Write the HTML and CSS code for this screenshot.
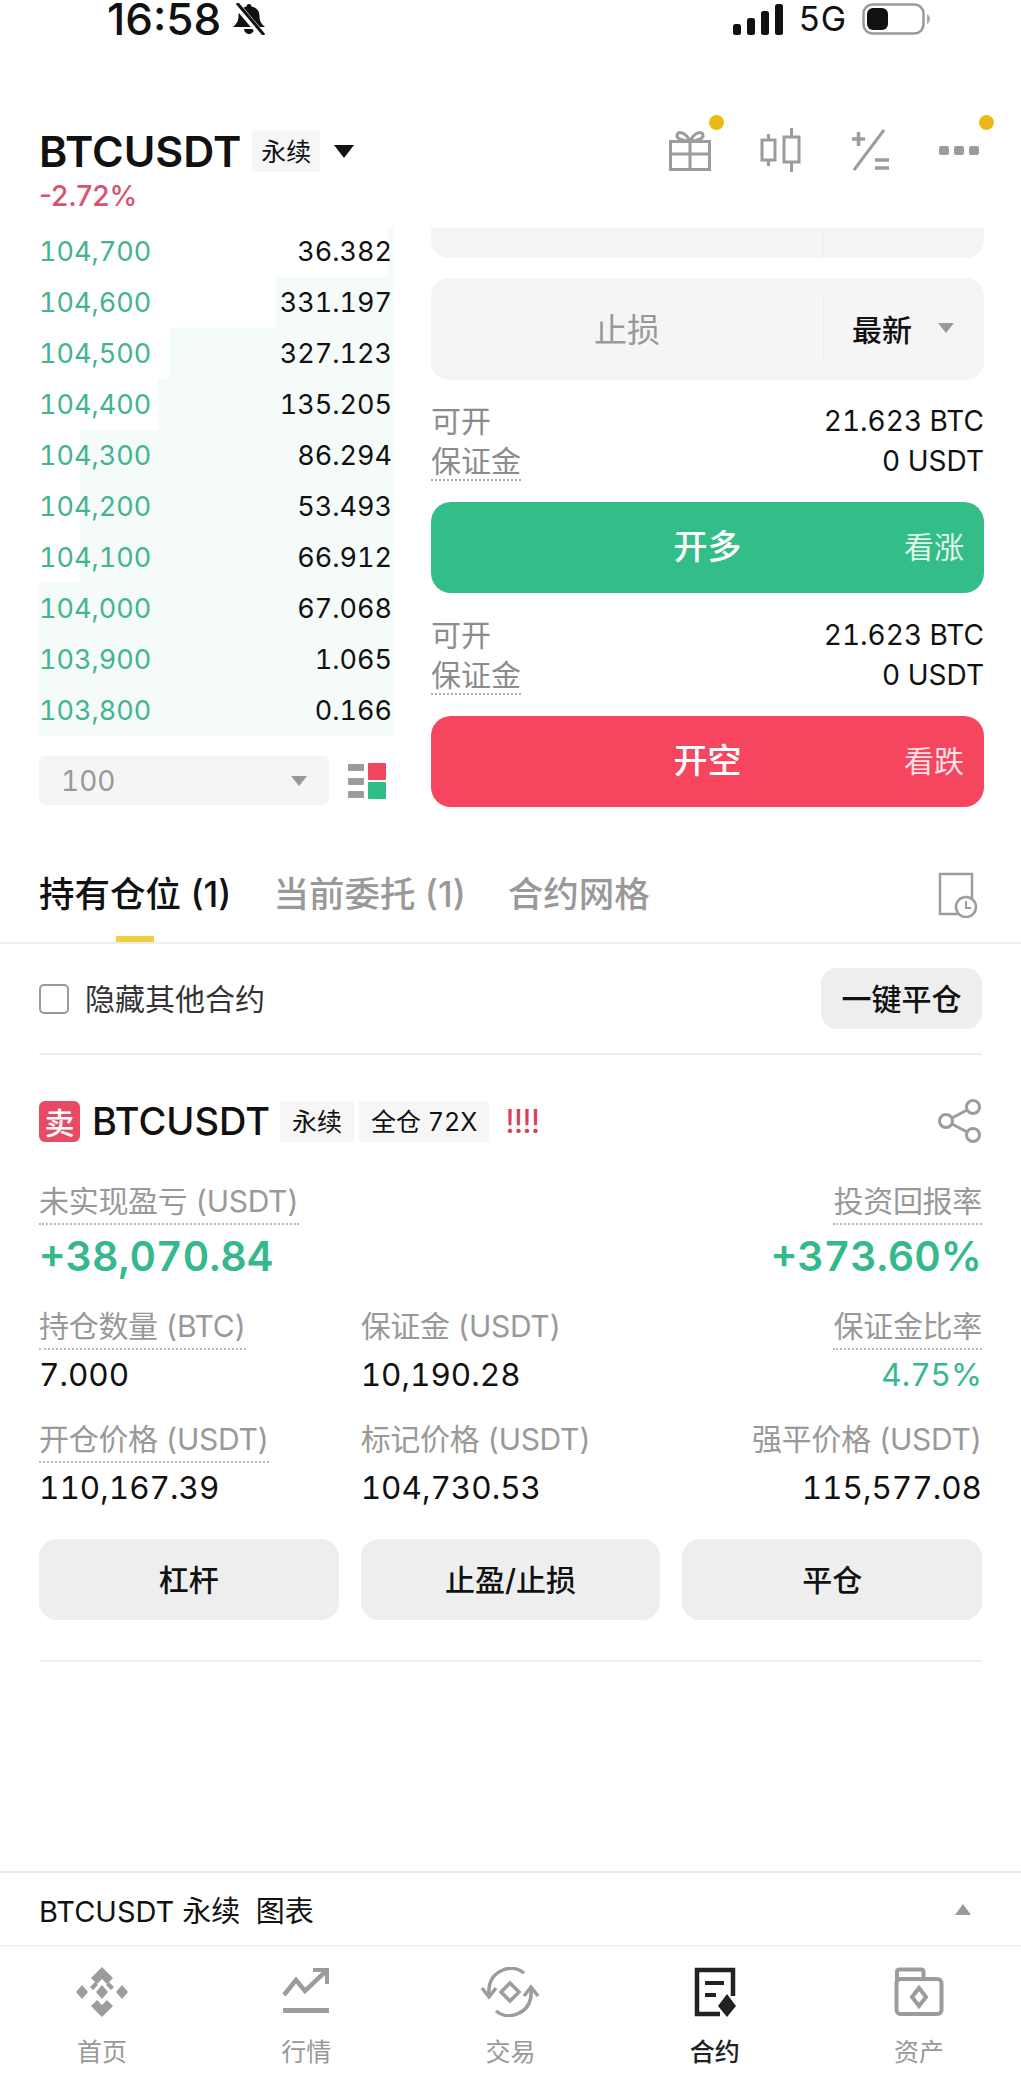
FILE: index.html
```html
<!DOCTYPE html>
<html lang="zh">
<head>
<meta charset="utf-8">
<title>BTCUSDT</title>
<link rel="stylesheet" href="styles.css">
</head>
<body>

<div class="statusbar">
  <span class="time">16:58</span>
  <svg class="bell" width="34" height="32" viewBox="0 0 34 32">
    <path d="M17 1c-1.500 0-2.500 1-2.500 2.500C8 5 6.500 9 6.500 13c0 5-2 8-5.500 11h32c-3.500-3-5.500-6-5.500-11 0-4-1.500-8-8-9.500C19.500 2 18.500 1 17 1z" fill="#111"/>
    <path d="M12 26h10c0 2.500-2.200 5-5 5s-5-2.500-5-5z" fill="#111"/>
    <path d="M3 0l27 32" stroke="#fff" stroke-width="7"/>
    <path d="M5 0l27 32" stroke="#111" stroke-width="3"/>
  </svg>
  <span class="spacer"></span>
  <svg width="50" height="32" viewBox="0 0 50 32">
    <rect x="0" y="21" width="8" height="11" rx="2.500" fill="#111"/>
    <rect x="14" y="15" width="8" height="17" rx="2.500" fill="#111"/>
    <rect x="28" y="8" width="8" height="24" rx="2.500" fill="#111"/>
    <rect x="42" y="1" width="8" height="31" rx="2.500" fill="#111"/>
  </svg>
  <span class="net">5G</span>
  <svg width="68" height="32" viewBox="0 0 68 32">
    <rect x="1.500" y="1.500" width="60" height="29" rx="9" fill="none" stroke="#999" stroke-width="2.500"/>
    <rect x="5" y="5" width="21" height="22" rx="6" fill="#111"/>
    <path d="M65 11c2 1 3 3 3 5s-1 4-3 5z" fill="#aaa"/>
  </svg>
</div>

<div class="header">
  <div class="title-box">
    <div class="title-row">
      <span class="title">BTCUSDT</span>
      <span class="tag tag-top">永续</span>
      <span class="caret-black"></span>
    </div>
    <div class="change">-2.72%</div>
  </div>
  <div class="tools">
    <span class="tool">
      <svg width="44" height="44" viewBox="0 0 44 44" fill="none" stroke="#9c9c9c" stroke-width="3">
        <rect x="2.500" y="13.500" width="39" height="28"/>
        <path d="M2.500 26h39M22 13.500v28"/>
        <path d="M22 13c-4-8-12-11-13-6-.8 4 6 6 13 6zM22 13c4-8 12-11 13-6 .8 4-6 6-13 6z"/>
      </svg>
      <i class="dot"></i>
    </span>
    <span class="tool">
      <svg width="42" height="44" viewBox="0 0 42 44" fill="none" stroke="#9c9c9c" stroke-width="3">
        <rect x="2" y="12" width="13" height="20"/>
        <path d="M8.500 6v6M8.500 32v6"/>
        <rect x="24" y="9" width="15" height="25"/>
        <path d="M31.500 0v9M31.500 34v10"/>
      </svg>
    </span>
    <span class="tool">
      <svg width="40" height="44" viewBox="0 0 40 44" fill="none" stroke="#9c9c9c" stroke-width="3.500">
        <path d="M2 11h13M8.500 4v14"/>
        <path d="M34 2L4 42" stroke-width="3"/>
        <path d="M25 32h14M25 40h14"/>
      </svg>
    </span>
    <span class="tool">
      <svg width="42" height="44" viewBox="0 0 42 44" fill="#9c9c9c">
        <rect x="1" y="18" width="10" height="9" rx="2"/>
        <rect x="16" y="18" width="10" height="9" rx="2"/>
        <rect x="31" y="18" width="10" height="9" rx="2"/>
      </svg>
      <i class="dot dot-more"></i>
    </span>
  </div>
</div>

<div class="trade">
  <div class="book">
    <div class="rows">
      <div class="row"><i class="bar" style="width: 6px"></i><span class="price">104,700</span><span class="qty">36.382</span></div>
      <div class="row"><i class="bar" style="width: 118px"></i><span class="price">104,600</span><span class="qty">331.197</span></div>
      <div class="row"><i class="bar" style="width: 225px"></i><span class="price">104,500</span><span class="qty">327.123</span></div>
      <div class="row"><i class="bar" style="width: 236px"></i><span class="price">104,400</span><span class="qty">135.205</span></div>
      <div class="row"><i class="bar" style="width: 314px"></i><span class="price">104,300</span><span class="qty">86.294</span></div>
      <div class="row"><i class="bar" style="width: 314px"></i><span class="price">104,200</span><span class="qty">53.493</span></div>
      <div class="row"><i class="bar" style="width: 314px"></i><span class="price">104,100</span><span class="qty">66.912</span></div>
      <div class="row"><i class="bar" style="width: 355px"></i><span class="price">104,000</span><span class="qty">67.068</span></div>
      <div class="row"><i class="bar" style="width: 355px"></i><span class="price">103,900</span><span class="qty">1.065</span></div>
      <div class="row"><i class="bar" style="width: 355px"></i><span class="price">103,800</span><span class="qty">0.166</span></div>
    </div>
    <div class="book-foot">
      <div class="depth"><span>100</span><i class="caret"></i></div>
      <svg width="38" height="36" viewBox="0 0 38 36">
        <rect x="0" y="1" width="16" height="7" rx="1" fill="#9c9c9c"/>
        <rect x="0" y="15" width="16" height="7" rx="1" fill="#9c9c9c"/>
        <rect x="0" y="28" width="16" height="7" rx="1" fill="#9c9c9c"/>
        <rect x="20" y="0" width="18" height="17" rx="1" fill="#f0475f"/>
        <rect x="20" y="19" width="18" height="17" rx="1" fill="#2ebd85"/>
      </svg>
    </div>
  </div>

  <div class="order">
    <div class="input input-cut"><span class="input-split"></span></div>
    <div class="input">
      <span class="input-label">止损</span>
      <div class="input-side"><b>最新</b><i class="caret"></i></div>
    </div>

    <div class="info info-first">
      <div class="info-row"><span class="muted">可开</span><span>21.623 BTC</span></div>
      <div class="info-row"><span class="muted dotted">保证金</span><span>0 USDT</span></div>
    </div>
    <div class="action long"><span class="action-name">开多</span><span class="action-hint">看涨</span></div>

    <div class="info">
      <div class="info-row"><span class="muted">可开</span><span>21.623 BTC</span></div>
      <div class="info-row"><span class="muted dotted">保证金</span><span>0 USDT</span></div>
    </div>
    <div class="action short"><span class="action-name">开空</span><span class="action-hint">看跌</span></div>
  </div>
</div>

<div class="tabs">
  <span class="tab active">持有仓位 (1)</span>
  <span class="tab">当前委托 (1)</span>
  <span class="tab">合约网格</span>
  <span class="spacer"></span>
  <svg width="40" height="46" viewBox="0 0 40 46" fill="none" stroke="#9c9c9c" stroke-width="2.500">
    <path d="M20 42H2V2h32v24"/>
    <circle cx="28" cy="35" r="10"/>
    <path d="M28 29v7h5" stroke-width="2"/>
  </svg>
</div>

<div class="filter">
  <span class="check"></span>
  <span class="filter-text">隐藏其他合约</span>
  <span class="spacer"></span>
  <span class="close-all">一键平仓</span>
</div>

<div class="position">
  <div class="pos-head">
    <span class="sell">卖</span>
    <span class="pos-name">BTCUSDT</span>
    <span class="tag">永续</span>
    <span class="tag">全仓 72X</span>
    <span class="risk">!!!!</span>
    <span class="spacer"></span>
    <svg width="44" height="44" viewBox="0 0 44 44" fill="none" stroke="#9c9c9c" stroke-width="3">
      <circle cx="8" cy="22" r="6.500"/>
      <circle cx="35" cy="8" r="6.500"/>
      <circle cx="35" cy="36" r="6.500"/>
      <path d="M14 19l15-8M14 25l15 8"/>
    </svg>
  </div>

  <div class="stats">
    <div class="stat">
      <span class="stat-label">未实现盈亏 (USDT)</span>
      <div class="stat-value big green">+38,070.84</div>
    </div>
    <div class="stat"></div>
    <div class="stat right">
      <span class="stat-label">投资回报率</span>
      <div class="stat-value big green">+373.60%</div>
    </div>

    <div class="stat">
      <span class="stat-label">持仓数量 (BTC)</span>
      <div class="stat-value">7.000</div>
    </div>
    <div class="stat">
      <span class="stat-label plain">保证金 (USDT)</span>
      <div class="stat-value">10,190.28</div>
    </div>
    <div class="stat right">
      <span class="stat-label">保证金比率</span>
      <div class="stat-value green">4.75%</div>
    </div>

    <div class="stat">
      <span class="stat-label">开仓价格 (USDT)</span>
      <div class="stat-value">110,167.39</div>
    </div>
    <div class="stat">
      <span class="stat-label plain">标记价格 (USDT)</span>
      <div class="stat-value">104,730.53</div>
    </div>
    <div class="stat right">
      <span class="stat-label plain">强平价格 (USDT)</span>
      <div class="stat-value">115,577.08</div>
    </div>
  </div>

  <div class="pos-buttons">
    <span class="pos-btn">杠杆</span>
    <span class="pos-btn">止盈/止损</span>
    <span class="pos-btn">平仓</span>
  </div>
</div>

<div class="chartbar">
  <span>BTCUSDT 永续&nbsp; 图表</span>
  <i class="caret-up"></i>
</div>

<div class="nav">
  <div class="nav-item">
    <svg width="52" height="50" viewBox="0 0 52 50" fill="#9c9c9c">
      <path d="M26 0l11 11-6 6-5-5-5 5-6-6z"/>
      <path d="M26 50L15 39l6-6 5 5 5-5 6 6z"/>
      <path d="M6 18l6 7-6 7-6-7z"/>
      <path d="M46 18l6 7-6 7-6-7z"/>
      <path d="M26 18l6 7-6 7-6-7z"/>
      <path d="M14 20l5-5 3 3-5 5zM38 20l-5-5-3 3 5 5z"/>
    </svg>
    <span>首页</span>
  </div>
  <div class="nav-item">
    <svg width="50" height="50" viewBox="0 0 50 50" fill="none" stroke="#9c9c9c" stroke-width="4.500">
      <path d="M3 28l12-15 9 11L45 4"/>
      <path d="M32 3h14v14" stroke-width="4"/>
      <rect x="2" y="41" width="46" height="5" fill="#9c9c9c" stroke="none"/>
    </svg>
    <span>行情</span>
  </div>
  <div class="nav-item">
    <svg width="60" height="50" viewBox="0 0 60 50" fill="none" stroke="#9c9c9c" stroke-width="3.500">
      <path d="M44 6C38 1 30 0 23 3 13 7 8 16 9 28"/>
      <path d="M2 21l7 9 7-9" stroke-width="3.500"/>
      <path d="M16 44c6 5 14 6 21 3 10-4 15-13 14-25"/>
      <path d="M44 29l7-9 7 9"/>
      <path d="M30 16l9 9-9 9-9-9z"/>
    </svg>
    <span>交易</span>
  </div>
  <div class="nav-item active">
    <svg width="42" height="50" viewBox="0 0 42 50" fill="none">
      <path d="M26 47H3V3h36v26" stroke="#222" stroke-width="4.500"/>
      <rect x="11" y="14" width="19" height="4" fill="#222"/>
      <rect x="11" y="26" width="11" height="4" fill="#222"/>
      <path d="M33 27l9 12-9 11-9-11z" fill="#222"/>
    </svg>
    <span>合约</span>
  </div>
  <div class="nav-item">
    <svg width="50" height="50" viewBox="0 0 50 50" fill="none" stroke="#9c9c9c" stroke-width="4">
      <path d="M3 14V5c0-1.500 1-2.500 2.500-2.500H27c1.500 0 2.500 1 2.500 2.500v9"/>
      <rect x="2.500" y="12" width="45" height="35" rx="4"/>
      <path d="M25 21l7 9-7 9-7-9z"/>
    </svg>
    <span>资产</span>
  </div>
</div>

</body>
</html>
```

FILE: styles.css
```css
* {
  box-sizing: border-box;
}

body {
  margin: 0;
  width: 1021px;
  height: 2080px;
  overflow: hidden;
  background: white;
  color: #111;
  font-family: Inter, "Noto Sans CJK SC", sans-serif;
  font-size: 29px;
  font-variant-numeric: tabular-nums;
}

i {
  display: block;
}

.spacer {
  flex: 1;
}

.muted {
  color: #8c8c8c;
}

/* Status bar */
.statusbar {
  display: flex;
  align-items: center;
  height: 38px;
  padding: 0 91px 0 107px;
}

.time {
  font-size: 44px;
  font-weight: 500;
  line-height: 38px;
  font-variant-numeric: normal;
}

.bell {
  margin-left: 11px;
}

.net {
  font-size: 34px;
  line-height: 38px;
  margin: 0 16px;
}

/* Header */
.header {
  display: flex;
  justify-content: space-between;
  align-items: flex-start;
  height: 186px;
  padding: 91px 41px 0 39px;
}

.title-row {
  display: flex;
  align-items: center;
  height: 44px;
}

.title {
  font-size: 43px;
  font-weight: 600;
}

.tag {
  display: flex;
  align-items: center;
  height: 41px;
  padding: 0 12px 2px;
  background: #f6f6f6;
  font-size: 25px;
}

.tag-top {
  margin-left: 11px;
  padding: 0 9px 2px;
}

.caret-black {
  width: 0;
  height: 0;
  margin-left: 14px;
  border-left: 10px solid transparent;
  border-right: 10px solid transparent;
  border-top: 13px solid #111;
}

.change {
  margin-top: 6px;
  color: #d9536f;
  font-size: 28px;
  font-weight: 500;
  font-variant-numeric: normal;
}

.tools {
  display: flex;
  gap: 48px;
  margin-top: -1px;
}

.tool {
  position: relative;
  display: block;
  height: 44px;
}

.dot {
  position: absolute;
  top: -13px;
  right: -12px;
  width: 15px;
  height: 15px;
  border-radius: 50%;
  background: #ecba14;
}

.dot-more {
  right: -14px;
}

/* Order book and order form */
.trade {
  display: flex;
  height: 624px;
  padding: 0 37px 0 39px;
}

.book {
  width: 355px;
  padding-top: 2px;
}

.rows {
  margin-bottom: 20px;
}

.row {
  position: relative;
  display: flex;
  justify-content: space-between;
  align-items: center;
  height: 51px;
  padding: 0 2px 0 0;
  font-size: 27px;
}

.bar {
  position: absolute;
  top: 0;
  right: 0;
  bottom: 0;
  background: #f4fbf9;
}

.price, .qty {
  position: relative;
}

.price {
  color: #44b38f;
}

.book-foot {
  display: flex;
  justify-content: space-between;
  align-items: center;
  padding-right: 8px;
}

.depth {
  display: flex;
  justify-content: space-between;
  align-items: center;
  width: 290px;
  height: 49px;
  padding: 0 22px;
  border-radius: 6px;
  background: #f5f5f5;
  color: #999;
  font-size: 28px;
}

.caret {
  width: 0;
  height: 0;
  border-left: 8px solid transparent;
  border-right: 8px solid transparent;
  border-top: 10px solid #999;
}

.order {
  width: 553px;
  margin-left: 37px;
  padding-top: 4px;
}

.input {
  display: flex;
  align-items: center;
  height: 102px;
  padding-bottom: 2px;
  border-radius: 18px;
  background: #f5f5f5;
}

.input-cut {
  align-items: flex-start;
  justify-content: flex-end;
  height: 30px;
  margin-bottom: 20px;
  padding-bottom: 0;
  border-radius: 0 0 18px 18px;
}

.input-split {
  width: 161px;
  height: 30px;
  border-left: 1px solid #eee;
}

.input-label {
  flex: 1;
  text-align: center;
  color: #999;
  font-size: 33px;
}

.input-side {
  display: flex;
  justify-content: space-between;
  align-items: center;
  width: 161px;
  height: 70px;
  padding: 0 30px 0 28px;
  border-left: 1px solid #ececec;
  font-size: 30px;
}

.input-side b {
  font-weight: 500;
}

.info {
  margin: 22px 0 21px;
}

.info-first {
  margin-top: 21px;
}

.info-row {
  display: flex;
  justify-content: space-between;
  height: 40px;
  line-height: 40px;
  font-size: 28px;
}

.info-row .muted {
  font-size: 30px;
}

.dotted {
  border-bottom: 2px dotted #aaa;
}

.action {
  display: flex;
  justify-content: center;
  align-items: center;
  position: relative;
  height: 91px;
  padding-bottom: 7px;
  border-radius: 20px;
  color: white;
}

.long {
  background: #33bd88;
}

.short {
  background: #f5455f;
}

.action-name {
  font-size: 34px;
  font-weight: 500;
}

.action-hint {
  position: absolute;
  right: 20px;
  top: 21px;
  font-size: 30px;
  opacity: .85;
}

/* Tabs */
.tabs {
  display: flex;
  align-items: center;
  height: 96px;
  padding: 0 43px 0 39px;
  border-bottom: 2px solid #eee;
  gap: 42px;
  font-size: 35.5px;
  font-variant-numeric: normal;
  color: #999;
}

.tab {
  position: relative;
  font-weight: 500;
  line-height: 94px;
}

.tab.active {
  color: #111;
}

.tab.active::after {
  content: "";
  position: absolute;
  left: 50%;
  bottom: 0;
  width: 38px;
  height: 6px;
  margin-left: -19px;
  background: #f0cf3c;
}

.filter {
  display: flex;
  align-items: center;
  height: 111px;
  margin: 0 39px;
  border-bottom: 2px solid #eee;
}

.check {
  width: 30px;
  height: 30px;
  margin-right: 16px;
  border: 2px solid #999;
  border-radius: 5px;
}

.filter-text {
  padding-bottom: 3px;
  font-size: 30px;
  color: #333;
}

.close-all {
  display: flex;
  justify-content: center;
  align-items: center;
  width: 161px;
  height: 61px;
  padding-bottom: 3px;
  border-radius: 16px;
  background: #eee;
  font-size: 30px;
  font-weight: 500;
}

/* Position */
.position {
  height: 607px;
  margin: 0 39px;
  padding-top: 44px;
  border-bottom: 2px solid #f0f0f0;
}

.pos-head {
  display: flex;
  align-items: center;
  gap: 5px;
  height: 44px;
  margin-bottom: 38px;
}

.sell {
  display: flex;
  justify-content: center;
  align-items: center;
  width: 41px;
  height: 41px;
  border-radius: 6px;
  background: #e84a63;
  color: white;
  font-size: 30px;
  font-weight: 500;
}

.pos-name {
  margin: 0 5px 0 7px;
  font-size: 38px;
  font-weight: 500;
}

.risk {
  margin-left: 11px;
  color: #d9405c;
  font-size: 33px;
  letter-spacing: -1px;
}

.stats {
  display: grid;
  grid-template-columns: repeat(3, 1fr);
  column-gap: 22px;
  row-gap: 19px;
}

.stat-label {
  display: inline-block;
  height: 44px;
  line-height: 40px;
  border-bottom: 2px dotted #bbb;
  color: #999;
  font-size: 30px;
  letter-spacing: -.3px;
  white-space: nowrap;
}

.stat-label.plain {
  border-bottom: none;
}

.stat-value {
  height: 50px;
  line-height: 50px;
  font-size: 31.5px;
}

.stat-value.big {
  height: 62px;
  line-height: 62px;
  font-size: 41px;
  font-weight: 600;
}

.green {
  color: #35b88c;
}

.right {
  text-align: right;
}

.pos-buttons {
  display: grid;
  grid-template-columns: repeat(3, 1fr);
  gap: 22px;
  margin-top: 26px;
}

.pos-btn {
  display: flex;
  justify-content: center;
  align-items: center;
  height: 81px;
  padding-bottom: 3px;
  border-radius: 18px;
  background: #eee;
  font-size: 30px;
  font-weight: 500;
}

/* Bottom */
.chartbar {
  display: flex;
  justify-content: space-between;
  align-items: center;
  height: 76px;
  margin-top: 209px;
  padding: 0 50px 0 39px;
  border-top: 2px solid #e8e8e8;
  border-bottom: 2px solid #f2f2f2;
  font-size: 29px;
}

.caret-up {
  width: 0;
  height: 0;
  border-left: 8px solid transparent;
  border-right: 8px solid transparent;
  border-bottom: 11px solid #999;
}

.nav {
  display: grid;
  grid-template-columns: repeat(5, 1fr);
  padding-top: 20px;
}

.nav-item {
  display: flex;
  flex-direction: column;
  align-items: center;
  gap: 15px;
  color: #999;
  font-size: 25px;
}

.nav-item.active {
  color: #222;
  font-weight: 500;
}
```
